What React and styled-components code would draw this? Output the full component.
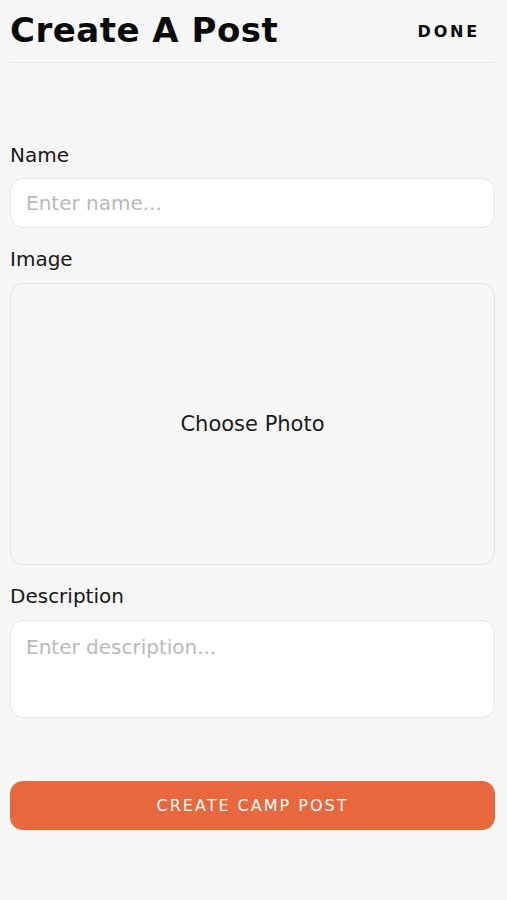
import React from "react";
import styled, { createGlobalStyle } from "styled-components";

const Global = createGlobalStyle`
  html, body {
    margin: 0;
    padding: 0;
    background: #f7f7f7;
  }
  body {
    font-family: "DejaVu Sans", "Liberation Sans", sans-serif;
    color: #1a1a1a;
  }
  * { box-sizing: border-box; }
`;

const Page = styled.div`
  min-height: 900px;
  background: #f7f7f7;
  padding: 0 12px 0 10px;
`;

const Header = styled.header`
  display: flex;
  align-items: center;
  justify-content: space-between;
  padding-top: 10px;
  padding-bottom: 12px;
  border-bottom: 1px solid #e6e6e6;
`;

const Title = styled.h1`
  margin: 0;
  font-family: "DejaVu Sans", sans-serif;
  font-weight: 700;
  font-size: 34px;
  line-height: 40px;
  letter-spacing: 0.5px;
  color: #0a0a0a;
`;

const DoneButton = styled.button`
  border: 0;
  background: transparent;
  padding: 0;
  margin-right: 15px;
  margin-top: 4px;
  font-family: "DejaVu Sans", sans-serif;
  font-weight: 700;
  font-size: 16px;
  line-height: 20px;
  letter-spacing: 2.8px;
  color: #0a0a0a;
`;

const Form = styled.form`
  display: flex;
  flex-direction: column;
  gap: 20px;
  padding-top: 81px;
`;

const Field = styled.div`
  display: flex;
  flex-direction: column;
  gap: ${(p) => p.$gap || 13}px;
`;

const Label = styled.label`
  font-size: 20px;
  line-height: 22px;
  color: #161616;
`;

const baseControl = `
  width: 100%;
  border: 1px solid #e6e6e6;
  border-radius: 13px;
  background: #ffffff;
  font-family: "DejaVu Sans", sans-serif;
  font-size: 20px;
  color: #1a1a1a;
  outline: none;
  padding-left: 15px;
  &::placeholder { color: #b9b9b9; opacity: 1; }
`;

const TextInput = styled.input`
  ${baseControl}
  height: 50px;
  line-height: 24px;
`;

const TextArea = styled.textarea`
  ${baseControl}
  display: block;
  height: 98px;
  resize: none;
  line-height: 24px;
  padding-top: 14px;
`;

const PhotoBox = styled.div`
  height: 282px;
  border: 1px solid #e3e3e3;
  border-radius: 13px;
  background: #f7f7f7;
  display: flex;
  align-items: center;
  justify-content: center;
  font-size: 21px;
  color: #1a1a1a;
`;

const SubmitButton = styled.button`
  margin-top: 43px;
  height: 49px;
  width: 100%;
  border: 0;
  border-radius: 13px;
  background: #e9673c;
  color: #ffffff;
  font-family: "DejaVu Sans", sans-serif;
  font-size: 16px;
  letter-spacing: 2px;
  text-transform: uppercase;
`;

export default function App() {
  return (
    <Page>
      <Global />
      <Header>
        <Title>Create A Post</Title>
        <DoneButton type="button">DONE</DoneButton>
      </Header>
      <Form onSubmit={(e) => e.preventDefault()}>
        <Field $gap={12}>
          <Label>Name</Label>
          <TextInput placeholder="Enter name..." />
        </Field>
        <Field>
          <Label>Image</Label>
          <PhotoBox>Choose Photo</PhotoBox>
        </Field>
        <Field>
          <Label>Description</Label>
          <TextArea placeholder="Enter description..." />
        </Field>
        <SubmitButton type="submit">Create Camp Post</SubmitButton>
      </Form>
    </Page>
  );
}
